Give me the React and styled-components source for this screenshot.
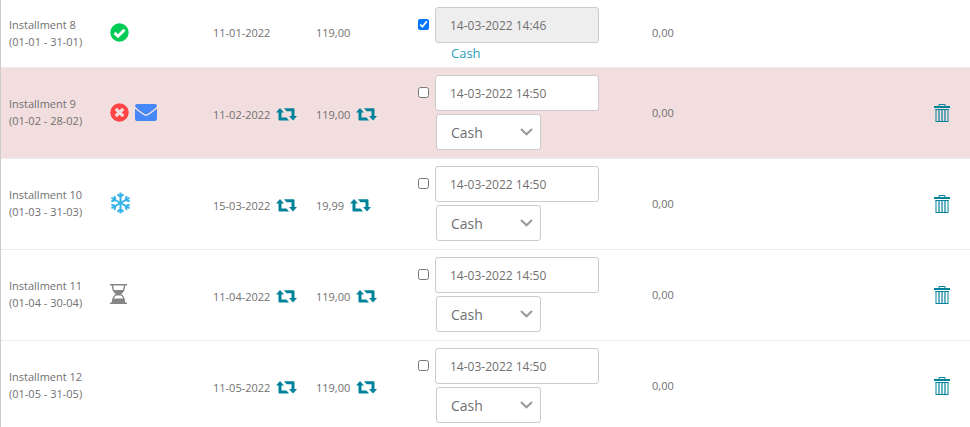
import React from "react";
import styled, { createGlobalStyle, css } from "styled-components";

const GlobalStyle = createGlobalStyle`
  * { box-sizing: border-box; }
  body {
    margin: 0;
    background: #fff;
    color: #707070;
    font-family: "Open Sans", "Noto Sans", sans-serif;
    font-size: 12px;
    line-height: 17px;
  }
`;

const Table = styled.table`
  width: 100%;
  table-layout: fixed;
  border-collapse: separate;
  border-spacing: 0;
  border-left: 1px solid #ccc;
  font-size: 11px;
`;

const Col = styled.col`
  width: ${({ $width }) => ($width ? `${$width}px` : "auto")};
`;

const Cell = styled.td`
  padding: 0 0 2px 8px;
  border-bottom: 1px solid #ececec;
  vertical-align: middle;
  text-align: ${({ $align }) => $align || "left"};
  ${({ $align }) => $align === "right" && css`padding-right: 20px;`}
`;

const Row = styled.tr`
  background: ${({ $overdue }) => ($overdue ? "#f2dede" : "#fff")};
`;

const Period = styled.div`
  white-space: nowrap;
`;

const StatusIcons = styled.div`
  display: flex;
  align-items: center;
  gap: 6px;
`;

const Inline = styled.div`
  display: flex;
  align-items: center;
  gap: 6px;
  padding-top: ${({ $editable }) => ($editable ? "4px" : "0")};
`;

const IconButton = styled.button`
  display: inline-flex;
  padding: 0;
  border: 0;
  background: none;
  color: #00829b;
  vertical-align: middle;
  cursor: pointer;
`;

const Payment = styled.div`
  display: grid;
  grid-template-columns: 11px 164px;
  column-gap: 6px;
  row-gap: ${({ $paid }) => ($paid ? "2px" : "3px")};
  align-items: start;
  padding: 7px 0 ${({ $paid }) => ($paid ? "3px" : "6px")};
`;

const Check = styled.input`
  width: 11px;
  height: 11px;
  margin: 12px 0 0;
`;

const DateInput = styled.input`
  width: 100%;
  height: 36px;
  padding: 0 14px;
  border: 1px solid #ccc;
  border-radius: 3px;
  background: #fff;
  color: #707070;
  font: inherit;
  font-size: 12px;
  &:disabled { background: #eee; }
`;

const MethodLink = styled.a`
  grid-column: 2;
  padding: 0 16px;
  color: #2a9fbc;
  font-size: 13px;
  text-decoration: none;
`;

const SelectBox = styled.div`
  grid-column: 2;
  display: grid;
  align-items: center;
  width: 105px;
  margin-left: 1px;
  > * { grid-area: 1 / 1; }
  > svg { justify-self: end; margin-right: 8px; pointer-events: none; }
`;

const Select = styled.select`
  width: 100%;
  height: 36px;
  padding: 0 14px;
  border: 1px solid #ccc;
  border-radius: 3px;
  background: #fff;
  color: #707070;
  font: inherit;
  font-size: 14px;
  appearance: none;
`;

const CheckCircle = () => (
  <svg width="19" height="19" viewBox="0 0 19 19" role="img" aria-label="Paid">
    <circle cx="9.5" cy="9.5" r="9.2" fill="#0c5" />
    <path d="M4.500 9.800l3.500 3.400 6.500-6.400" fill="none" stroke="#fff" strokeWidth="3" />
  </svg>
);

const CrossCircle = () => (
  <svg width="19" height="19" viewBox="0 0 19 19" role="img" aria-label="Unpaid">
    <circle cx="9.5" cy="9.5" r="9.2" fill="#ff4545" />
    <path d="M5.800 5.800l7.400 7.400M13.200 5.800l-7.400 7.400" fill="none" stroke="#f2dede" strokeWidth="3.2" />
  </svg>
);

const Envelope = () => (
  <svg width="22" height="17" viewBox="0 0 22 17" role="img" aria-label="Reminder sent">
    <path fill="#4688f7" d="M2 0h18a2 2 0 0 1 2 2C21 4 17 7 14 9c-1.200.8-2 1.400-3 1.400S9.200 9.800 8 9C5 7 1 4 0 2a2 2 0 0 1 2-2z" />
    <path fill="#4688f7" d="M0 4.500C2 6.500 5 8.500 7.500 10.300 9 11.300 10 11.800 11 11.800s2-.5 3.500-1.500C17 8.500 20 6.500 22 4.500V15a2 2 0 0 1-2 2H2a2 2 0 0 1-2-2z" />
  </svg>
);

const Snowflake = () => (
  <svg width="21" height="22" viewBox="-10.500 -11 21 22" role="img" aria-label="Frozen">
    <g fill="none" stroke="#35b3e8" strokeWidth="2">
      {[0, 60, 120, 180, 240, 300].map((angle) => (
        <path key={angle} transform={`rotate(${angle})`} d="M0 0V-10.500M-3-8.800L0-6l3-2.800" />
      ))}
    </g>
  </svg>
);

const Hourglass = () => (
  <svg width="17" height="20" viewBox="0 0 17 20" role="img" aria-label="Pending">
    <g fill="#858585">
      <path d="M0 0h17v1.500H0zM0 18.500h17V20H0z" />
      <path d="M2.500 1C2.500 6 4 8.500 6.800 10 4 11.500 2.500 14 2.500 19M14.500 1c0 5-1.500 7.500-4.300 9 2.800 1.500 4.300 4 4.300 9" fill="none" stroke="#858585" strokeWidth="1.4" />
      <path d="M3.500 6h10c-.8 2-2 3-3.500 4 1 .5 1.500 1 2 1.500h-7c.5-.5 1-1 2-1.500C5.500 9 4.300 8 3.500 6z" />
      <path d="M2.800 14.500h11.400l.5 4.500H2.300z" />
    </g>
  </svg>
);

const Retweet = () => (
  <svg width="21" height="13" viewBox="0 0 21 13" fill="currentColor" aria-hidden="true">
    <path d="M4 0l4 4.500H5.500V9.500H10.500l2.500 3H3.500Q2.500 12.500 2.500 11.500V4.500H0z" />
    <path d="M17 12.500l4-4.500h-2.500V1.300Q18.500.3 17.500.3H8l2.500 2.900h5V8H13z" />
  </svg>
);

const Trash = () => (
  <svg width="16" height="18" viewBox="0 0 16 18" fill="none" stroke="currentColor" aria-hidden="true">
    <path d="M5 2.500V.5h6v2" />
    <path d="M0 3h16" strokeWidth="2" />
    <path d="M1.500 5.500h13M2 5v12M14 5v12M1.500 17.500h13" />
    <path d="M5 6v11M8 6v11M11 6v11" strokeWidth="1.2" />
  </svg>
);

const Chevron = () => (
  <svg width="13" height="8" viewBox="0 0 13 8" aria-hidden="true">
    <path d="M1 1l5.500 5.300L12 1" fill="none" stroke="#999" strokeWidth="2" />
  </svg>
);

const installments = [
  { id: 8, period: "(01-01 - 31-01)", due: "11-01-2022", amount: "119,00", paidAt: "14-03-2022 14:46", paid: true, icons: [CheckCircle] },
  { id: 9, period: "(01-02 - 28-02)", due: "11-02-2022", amount: "119,00", paidAt: "14-03-2022 14:50", overdue: true, icons: [CrossCircle, Envelope] },
  { id: 10, period: "(01-03 - 31-03)", due: "15-03-2022", amount: "19,99", paidAt: "14-03-2022 14:50", icons: [Snowflake] },
  { id: 11, period: "(01-04 - 30-04)", due: "11-04-2022", amount: "119,00", paidAt: "14-03-2022 14:50", icons: [Hourglass] },
  { id: 12, period: "(01-05 - 31-05)", due: "11-05-2022", amount: "119,00", paidAt: "14-03-2022 14:50", icons: [] },
];

function Editable({ value, label, editable }) {
  return (
    <Inline $editable={editable}>
      {value}
      {editable && <IconButton type="button" aria-label={label}><Retweet /></IconButton>}
    </Inline>
  );
}

function InstallmentRow({ item }) {
  const name = `Installment ${item.id}`;
  return (
    <Row $overdue={item.overdue}>
      <Cell><Period>{name}<br />{item.period}</Period></Cell>
      <Cell><StatusIcons>{item.icons.map((Icon, i) => <Icon key={i} />)}</StatusIcons></Cell>
      <Cell><Editable value={item.due} editable={!item.paid} label={`Change date of ${name}`} /></Cell>
      <Cell><Editable value={item.amount} editable={!item.paid} label={`Change amount of ${name}`} /></Cell>
      <Cell>
        <Payment $paid={item.paid}>
          <Check type="checkbox" defaultChecked={item.paid} aria-label={`${name} paid`} />
          <DateInput type="text" defaultValue={item.paidAt} disabled={item.paid} aria-label={`Payment date of ${name}`} />
          {item.paid ? <MethodLink href="#">Cash</MethodLink> : (
            <SelectBox>
              <Select aria-label={`Payment method of ${name}`}><option>Cash</option></Select>
              <Chevron />
            </SelectBox>
          )}
        </Payment>
      </Cell>
      <Cell>0,00</Cell>
      <Cell $align="right">
        {!item.paid && <IconButton type="button" aria-label={`Delete ${name}`}><Trash /></IconButton>}
      </Cell>
    </Row>
  );
}

export default function App() {
  return (
    <>
      <GlobalStyle />
      <Table>
        <colgroup>
          {[101, 103, 103, 102, 234, 100, null].map((width, i) => <Col key={i} $width={width} />)}
        </colgroup>
        <tbody>
          {installments.map((item) => <InstallmentRow key={item.id} item={item} />)}
        </tbody>
      </Table>
    </>
  );
}
